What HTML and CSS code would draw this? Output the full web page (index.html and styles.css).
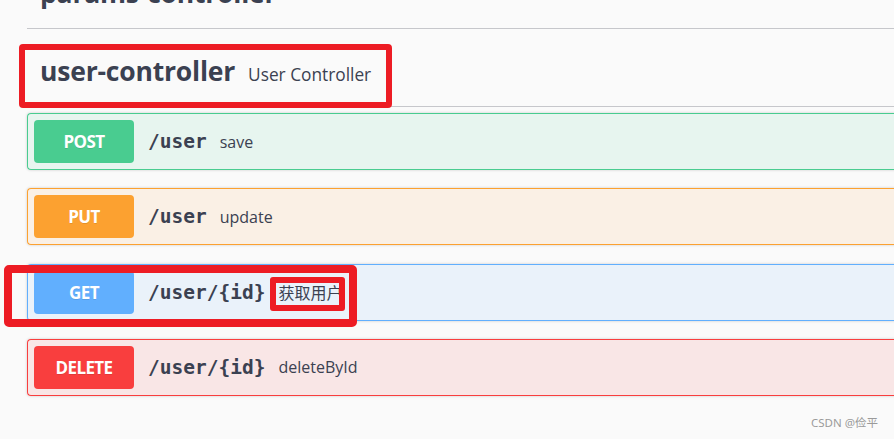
FILE: index.html
```html
<!DOCTYPE html>
<html lang="zh">
<head>
<meta charset="utf-8">
<title>Swagger UI</title>
<link rel="stylesheet" href="styles.css">
</head>
<body>
<div class="page">
  <section class="tag tag-cut">
    <h4 class="tag-title"><span class="tag-name">params-controller</span></h4>
  </section>
  <section class="tag">
    <h4 class="tag-title"><span class="tag-name">user-controller</span><small class="tag-desc">User Controller</small></h4>
    <div class="ops">
      <div class="op op-post">
        <div class="op-summary"><span class="method">POST</span><span class="path">/user</span><span class="desc">save</span></div>
      </div>
      <div class="op op-put">
        <div class="op-summary"><span class="method">PUT</span><span class="path">/user</span><span class="desc">update</span></div>
      </div>
      <div class="op op-get">
        <div class="op-summary"><span class="method">GET</span><span class="path">/user/{id}</span><span class="desc">获取用户</span></div>
      </div>
      <div class="op op-delete">
        <div class="op-summary"><span class="method">DELETE</span><span class="path">/user/{id}</span><span class="desc">deleteById</span></div>
      </div>
    </div>
  </section>
</div>
<div class="mark mark-tag"></div>
<div class="mark mark-get"></div>
<div class="mark mark-desc"></div>
<div class="watermark">CSDN @俭平</div>
</body>
</html>
```
FILE: styles.css
```css
html, body {
  margin: 0;
  padding: 0;
  background: #fafafa;
  overflow: hidden;
  width: 894px;
  height: 439px;
  position: relative;
}

body {
  font-family: "Open Sans", "Noto Sans CJK SC", sans-serif;
  color: #3b4151;
}

.page {
  margin-left: 27px;
  width: 900px;
}

.tag-cut {
  margin-top: -43px;
}

.tag-title {
  margin: 0 0 6px 0;
  height: 72px;
  box-sizing: border-box;
  padding: 18px 0 0 13px;
  display: flex;
  align-items: baseline;
  border-bottom: 1px solid #c6c7cb;
  font-weight: 700;
}

.tag-name {
  font-family: "Open Sans", sans-serif;
  font-size: 26.5px;
  line-height: 36px;
  font-weight: 700;
  color: #3b4151;
  letter-spacing: -0.2px;
}

.tag-desc {
  margin-left: 13px;
  font-family: "Open Sans", sans-serif;
  font-size: 17.3px;
  font-weight: 400;
  color: #3b4151;
}

.ops {
  display: flex;
  flex-direction: column;
  gap: 18.3px;
}

.op {
  border: 1px solid #000;
  border-right: none;
  border-radius: 4px 0 0 4px;
  box-shadow: 0 0 3px rgba(0, 0, 0, 0.19);
}

.op-summary {
  display: flex;
  align-items: center;
  padding: 6px;
  height: 43px;
}

.method {
  width: 100px;
  height: 43px;
  flex: none;
  display: flex;
  align-items: center;
  justify-content: center;
  border-radius: 4px;
  color: #fff;
  font-family: "Open Sans", sans-serif;
  font-weight: 700;
  font-size: 17px;
  letter-spacing: -0.6px;
  text-shadow: 0 1px 0 rgba(0, 0, 0, 0.1);
}

.path {
  margin-left: 14px;
  font-family: "DejaVu Sans Mono", monospace;
  font-weight: 700;
  font-size: 19.5px;
  color: #3b4151;
}

.desc {
  margin-left: 13px;
  font-family: "Open Sans", "Noto Sans CJK SC", sans-serif;
  font-size: 16px;
  color: #3b4151;
}

.op-post { background: rgba(73, 204, 144, 0.1); border-color: #49cc90; }
.op-post .method { background: #49cc90; }

.op-put { background: rgba(252, 161, 48, 0.1); border-color: #fca130; }
.op-put .method { background: #fca130; }

.op-get { background: rgba(97, 175, 254, 0.1); border-color: #61affe; }
.op-get .method { background: #61affe; }

.op-delete { background: rgba(249, 62, 62, 0.1); border-color: #f93e3e; }
.op-delete .method { background: #f93e3e; }

.mark {
  position: absolute;
  box-sizing: border-box;
  border: 6px solid #ed1c24;
  border-radius: 4px;
}

.mark-tag {
  left: 19px;
  top: 44px;
  width: 373px;
  height: 64px;
}

.mark-get {
  left: 4px;
  top: 265px;
  width: 353px;
  height: 62px;
  border-width: 8px;
  border-radius: 5px;
}

.mark-desc {
  left: 270px;
  top: 277px;
  width: 75px;
  height: 34px;
  border-radius: 3px;
}

.watermark {
  position: absolute;
  left: 811px;
  top: 414px;
  font-family: "Noto Sans", "Noto Sans CJK SC", sans-serif;
  font-size: 11.5px;
  color: #9a9a9a;
  white-space: nowrap;
}
```
